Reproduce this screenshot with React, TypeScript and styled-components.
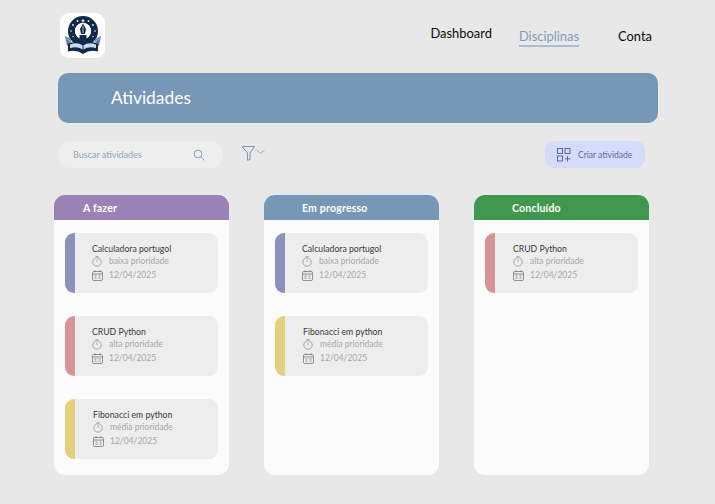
// App.tsx
import React from 'react';
import styled, { createGlobalStyle } from 'styled-components';

const GlobalStyle = createGlobalStyle`
    * { box-sizing: border-box; }
    html, body {
        margin: 0;
        background: #e8e8e8;
        font-family: 'Lato', 'Open Sans', sans-serif;
    }
`;

type Priority = 'baixa' | 'média' | 'alta';

const priorityColor: Record<Priority, string> = {
    baixa: '#8992bd',
    média: '#e3d07d',
    alta: '#d69494',
};

const baixa = { title: 'Calculadora portugol', priority: 'baixa' as Priority, indent: 17 };
const crud = { title: 'CRUD Python', priority: 'alta' as Priority, indent: 17 };
const fibo = { title: 'Fibonacci em python', priority: 'média' as Priority, indent: 18 };

const columns = [
    { name: 'A fazer', color: '#9b82b6', inset: 29, tasks: [baixa, crud, fibo] },
    { name: 'Em progresso', color: '#7797b6', inset: 38, tasks: [baixa, fibo] },
    { name: 'Concluído', color: '#3f984d', inset: 38, tasks: [{ ...crud, indent: 18 }] },
];

const Logo = () => (
    <svg width="38" height="40" viewBox="0 0 38 40">
        <circle cx="19" cy="15" r="11.5" fill="none" stroke="#10294a" strokeWidth="7" />
        <g fill="#e8edf3">
            <path d="M19 2.6l.7 1.6 1.6.7-1.6.7-.7 1.6-.7-1.6-1.6-.7 1.6-.7z" />
            <circle cx="13.5" cy="5" r="0.9" />
            <circle cx="24.5" cy="5" r="0.9" />
            <circle cx="9" cy="9" r="0.9" />
            <circle cx="29" cy="9" r="0.9" />
            <circle cx="7" cy="15" r="0.8" />
            <circle cx="31" cy="15" r="0.8" />
            <circle cx="9" cy="20.5" r="0.7" />
            <circle cx="29" cy="20.5" r="0.7" />
        </g>
        <circle cx="19" cy="15" r="8" fill="#fff" />
        <path d="M19 7.5 L22 13 L21 18 H17 L16 13 Z" fill="#10294a" />
        <rect x="15.5" y="19" width="7" height="4.5" rx="0.6" fill="#10294a" />
        <path d="M19 10v7" stroke="#fff" strokeWidth="0.7" />
        <path d="M1 20 L6.5 23 L9 32 L3 29.5 Z" fill="#5d7a9c" />
        <path d="M37 20 L31.5 23 L29 32 L35 29.5 Z" fill="#5d7a9c" />
        <path d="M2.5 22.5 L6 25 L7.5 29.5" fill="none" stroke="#dfe7ef" strokeWidth="0.6" />
        <path d="M35.5 22.5 L32 25 L30.5 29.5" fill="none" stroke="#dfe7ef" strokeWidth="0.6" />
        <path d="M4 28 Q12 24 19 28.5 Q26 24 34 28 V35.5 Q26 33 19 38 Q12 33 4 35.5 Z" fill="#10294a" />
        <path d="M6 28.5 Q13 25.5 18.5 29.2 V33.5 Q13 30 6 32.2 Z" fill="#c9dcee" />
        <path d="M32 28.5 Q25 25.5 19.5 29.2 V33.5 Q25 30 32 32.2 Z" fill="#c9dcee" />
    </svg>
);

const SearchIcon = () => (
    <svg width="12" height="12" viewBox="0 0 12 12" fill="none" stroke="#7c9ab8" strokeWidth="0.9">
        <circle cx="5" cy="5" r="3.9" />
        <path d="M8 8l3.4 3.4" />
    </svg>
);

const FilterIcon = () => (
    <svg width="25" height="16" viewBox="0 0 25 16" fill="none" stroke="#7797b6" strokeWidth="1">
        <path d="M1 1.5h12.5L9 8v6.5L6.5 15.3V8z" strokeLinejoin="round" />
        <path d="M15.5 5l4 3.5 4-3.5" stroke="#8fa8c0" />
    </svg>
);

const CreateIcon = () => (
    <svg width="14" height="14" viewBox="0 0 14 14" fill="none" stroke="#4c5aa8" strokeWidth="0.9">
        <rect x="0.5" y="0.5" width="5" height="5" />
        <rect x="8" y="0.5" width="5" height="5" />
        <rect x="0.5" y="8" width="5" height="5" />
        <path d="M10.5 8v5.5M8 10.8h5.5" />
    </svg>
);

const ClockIcon = () => (
    <svg width="11" height="11" viewBox="0 0 11 11" fill="none" stroke="#8b8b8b" strokeWidth="0.7">
        <circle cx="5" cy="6" r="4.2" />
        <path d="M5 6V3.5M3.5 0.6h3" />
    </svg>
);

const CalendarIcon = () => (
    <svg width="11" height="11" viewBox="0 0 11 11" fill="none" stroke="#777" strokeWidth="0.8">
        <rect x="0.5" y="1.5" width="10" height="9" rx="1.2" />
        <path d="M0.5 4h10M3 0.2v2M8 0.2v2" />
        <path d="M2.5 6h2M6.5 6h2M2.5 8.2h2M6.5 8.2h2" />
    </svg>
);

const Page = styled.div`
    width: 715px;
    height: 504px;
    overflow: hidden;
    background: #e8e8e8;
`;

const Header = styled.header`
    display: flex;
    justify-content: space-between;
    padding: 13px 63px 0 60px;
    height: 73px;
`;

const LogoBox = styled.div`
    width: 45px;
    height: 45px;
    background: #fff;
    border-radius: 9px;
    display: flex;
    align-items: center;
    justify-content: center;
`;

const Nav = styled.nav`
    display: flex;
    align-items: flex-start;
    gap: 27px;
    padding-top: 12px;
`;

const NavItem = styled.a<{ $active?: boolean; $raised?: boolean; $gap?: number }>`
    font-size: 12.9px;
    line-height: 16px;
    height: 19px;
    margin-top: ${(p) => (p.$raised ? '0' : '3px')};
    margin-left: ${(p) => p.$gap ?? 0}px;
    color: ${(p) => (p.$active ? '#7f9dba' : '#0a0a0a')};
    border-bottom: ${(p) => (p.$active ? '2px solid #a9bed1' : 'none')};
`;

const Banner = styled.div`
    margin: 0 57px 0 58px;
    height: 50px;
    border-radius: 10px;
    background: #7797b6;
    color: #fff;
    font-size: 17.4px;
    line-height: 50px;
    padding-left: 53px;
`;

const Toolbar = styled.div`
    display: flex;
    align-items: center;
    margin: 18px 70px 0 58px;
    height: 27px;
`;

const SearchBox = styled.div`
    width: 165px;
    height: 27px;
    border-radius: 13px;
    background: #eeeeee;
    display: flex;
    align-items: center;
    justify-content: space-between;
    padding: 0 18px 0 15px;
    font-size: 9px;
    color: #8fa8c0;
`;

const FilterButton = styled.div`
    display: flex;
    margin-left: 18px;
    margin-top: -3px;
`;

const CreateButton = styled.div`
    margin-left: auto;
    width: 100px;
    height: 27px;
    border-radius: 9px;
    background: #d5dcfb;
    color: #5a68ad;
    font-size: 8.5px;
    display: flex;
    align-items: center;
    gap: 7px;
    padding-left: 12px;
`;

const Board = styled.main`
    display: flex;
    gap: 35px;
    margin: 27px 0 0 54px;
`;

const Column = styled.section`
    width: 175px;
    height: 280px;
    border-radius: 11px;
    background: #fbfbfb;
    overflow: hidden;
`;

const ColumnTitle = styled.h2<{ $color: string; $inset: number }>`
    margin: 0;
    height: 25px;
    padding-left: ${(p) => p.$inset}px;
    background: ${(p) => p.$color};
    color: #fff;
    font-size: 10.5px;
    font-weight: 700;
    line-height: 26px;
    letter-spacing: 0.2px;
`;

const TaskList = styled.div`
    display: flex;
    flex-direction: column;
    gap: 23px;
    padding: 13px 11px;
`;

const Task = styled.article<{ $color: string; $indent: number }>`
    height: 60px;
    border-radius: 9px;
    background: #ededed;
    border-left: 10px solid ${(p) => p.$color};
    padding: 11px 0 0 ${(p) => p.$indent}px;
`;

const TaskTitle = styled.div`
    font-size: 8.7px;
    line-height: 10px;
    color: #3a3a3a;
`;

const TaskRow = styled.div`
    display: flex;
    align-items: center;
    gap: 6px;
    height: 14px;
    font-size: 8.5px;
    color: #a8a8a8;

    svg {
        flex: 0 0 auto;
    }
`;

const App: React.FC = () => (
    <Page>
        <GlobalStyle />
        <Header>
            <LogoBox>
                <Logo />
            </LogoBox>
            <Nav>
                <NavItem $raised>Dashboard</NavItem>
                <NavItem $active>Disciplinas</NavItem>
                <NavItem $gap={12}>Conta</NavItem>
            </Nav>
        </Header>
        <Banner>Atividades</Banner>
        <Toolbar>
            <SearchBox>
                Buscar atividades
                <SearchIcon />
            </SearchBox>
            <FilterButton>
                <FilterIcon />
            </FilterButton>
            <CreateButton>
                <CreateIcon />
                Criar atividade
            </CreateButton>
        </Toolbar>
        <Board>
            {columns.map((column) => (
                <Column key={column.name}>
                    <ColumnTitle $color={column.color} $inset={column.inset}>
                        {column.name}
                    </ColumnTitle>
                    <TaskList>
                        {column.tasks.map((task) => (
                            <Task key={task.title} $color={priorityColor[task.priority]} $indent={task.indent}>
                                <TaskTitle>{task.title}</TaskTitle>
                                <TaskRow>
                                    <ClockIcon />
                                    {task.priority} prioridade
                                </TaskRow>
                                <TaskRow>
                                    <CalendarIcon />
                                    12/04/2025
                                </TaskRow>
                            </Task>
                        ))}
                    </TaskList>
                </Column>
            ))}
        </Board>
    </Page>
);

export default App;
